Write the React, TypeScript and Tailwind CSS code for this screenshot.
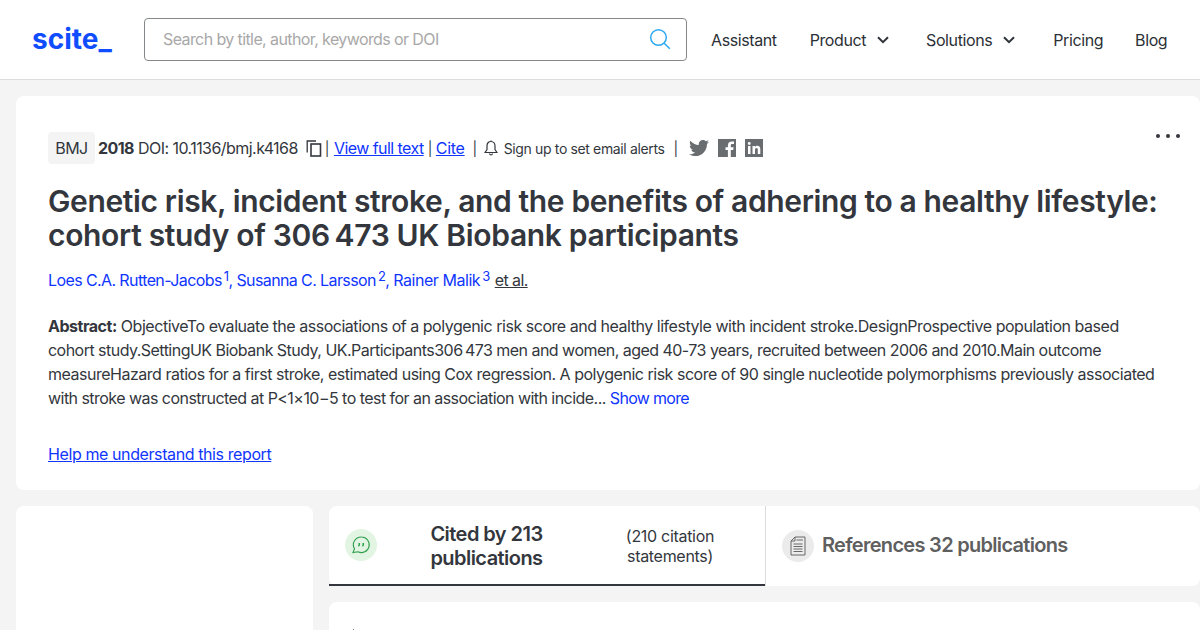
import React from 'react';
import { FaTwitter } from 'react-icons/fa';

const font = "font-['Inter','Noto_Sans',sans-serif]";

const Chevron = () => (
  <svg width="12" height="8" viewBox="0 0 12 8" fill="none" stroke="#2f343a" strokeWidth="2" className="ml-[11px]">
    <path d="M1 1.2l5 5 5-5" />
  </svg>
);

const Sep = ({ className = '' }: { className?: string }) => <span className={`text-[14px] text-[#33373d] ${className}`}>|</span>;

const Author = ({ name, n }: { name: string; n: number }) => (
  <span>
    {name}
    <sup className="text-[13px] ml-[2px] -top-[5px]">{n}</sup>
  </span>
);

const App: React.FC = () => {
  return (
    <div className={`h-[630px] w-[1200px] overflow-hidden bg-[#f4f4f4] text-[#33373d] ${font}`}>
      <header className="h-20 bg-white border-b border-[#dcdcdc] flex items-center pl-8 pr-8">
        <div className="w-[112px] text-[28px] font-bold text-[#0f4dff] leading-none -mt-[2px]">scite_</div>
        <div className="w-[543px] h-[43px] border border-[#85888a] rounded flex items-center justify-between pl-[18px] pr-[15px] -mt-[1px]">
          <span className="text-[16px] text-[#a8a8a8] tracking-[-0.6px]">Search by title, author, keywords or DOI</span>
          <svg width="22" height="22" viewBox="0 0 22 22" fill="none" stroke="#29a8f4" strokeWidth="1.5">
            <circle cx="9.5" cy="9.5" r="7.8" />
            <path d="M15.2 15.2l5.6 5.6" />
          </svg>
        </div>
        <nav className="flex items-center pl-6 text-[16px] text-[#2b3036] tracking-[-0.4px]">
          <span>Assistant</span>
          <span className="ml-[33px] flex items-center">Product<Chevron /></span>
          <span className="ml-[37px] flex items-center">Solutions<Chevron /></span>
          <span className="ml-[38px]">Pricing</span>
          <span className="ml-[32px]">Blog</span>
        </nav>
      </header>

      <section className="relative mt-4 ml-4 h-[394px] bg-white rounded-lg pl-8 pt-9">
        <div className="absolute right-[20px] top-[38px] flex gap-[6px]">
          <span className="w-1 h-1 rounded-full bg-[#33373d]" />
          <span className="w-1 h-1 rounded-full bg-[#33373d]" />
          <span className="w-1 h-1 rounded-full bg-[#33373d]" />
        </div>

        <div className="flex items-center h-8 text-[16px] tracking-[-0.55px] whitespace-nowrap">
          <span className="w-[47px] h-8 rounded bg-[#f4f4f4] flex items-center justify-center">BMJ</span>
          <b className="ml-[3px] font-bold">2018</b>
          <span className="ml-1">DOI: 10.1136/bmj.k4168</span>
          <svg width="17" height="17" viewBox="0 0 17 17" fill="none" stroke="#33373d" className="ml-2" strokeWidth="1.3">
            <path d="M10 1H1.2v11.5" />
            <rect x="5" y="4" width="9.5" height="12" strokeWidth="1.6" />
          </svg>
          <Sep className="ml-[2px]" />
          <a className="ml-[5px] text-[#0f35ff] underline">View full text</a>
          <Sep className="ml-1" />
          <a className="ml-[4px] text-[#0f35ff] underline tracking-[-0.3px]">Cite</a>
          <Sep className="ml-2" />
          <svg width="14" height="17" viewBox="0 0 14 17" fill="none" stroke="#33373d" strokeWidth="1.2" className="ml-[7px]">
            <path d="M7 1.5c-2.7 0-4 2-4 4.5v3.5L1 12.5h12l-2-3V6c0-2.500-1.300-4.500-4-4.500zM7 .5v1M5.500 13.500c.3 1.800 2.700 1.800 3 0" />
          </svg>
          <span className="ml-[6px] text-[14px] tracking-[-0.36px]">Sign up to set email alerts</span>
          <Sep className="ml-[9px]" />
          <span className="ml-[11px] flex items-center text-[#696d70]">
            <FaTwitter size={20} />
            <svg width="18" height="18" viewBox="0 0 18 18" fill="currentColor" className="ml-[9px]">
              <path d="M0 0h18v18h-5.200v-7h2.400l.4-2.800h-2.800V6.500c0-.8.2-1.400 1.400-1.400H16V2.600c-.3 0-1.200-.1-2.300-.1-2.300 0-3.800 1.400-3.800 3.900v1.800H7.500V11h2.400v7H0z" />
            </svg>
            <svg width="18" height="18" viewBox="0 0 18 18" fill="currentColor" fillRule="evenodd" className="ml-[9px]">
              <path d="M0 0h18v18H0zM3 7v8h2.500V7zM4.250 3a1.450 1.450 0 1 0 0 2.900 1.450 1.450 0 0 0 0-2.900zM7.500 7v8H10v-4.200c0-1.200.5-1.900 1.500-1.900s1.300.7 1.300 1.900V15h2.500v-4.800c0-2.300-1.200-3.400-3-3.400-1.200 0-2 .6-2.300 1.200V7z" />
            </svg>
          </span>
        </div>

        <h1 className="mt-5 text-[30px] leading-[34px] font-semibold tracking-[-0.37px] text-[#33373d] whitespace-nowrap">
          Genetic risk, incident stroke, and the benefits of adhering to a healthy lifestyle:
          <br />
          <span className="tracking-[-0.33px]">cohort study of 306{'\u2009'}473 UK Biobank participants</span>
        </h1>

        <div className="mt-[16px] h-6 flex items-center text-[16px] tracking-[-0.6px] text-[#0f35ff] whitespace-nowrap">
          <Author name="Loes C.A. Rutten-Jacobs" n={1} />
          <span>,&nbsp;</span>
          <Author name="Susanna C. Larsson" n={2} />
          <span>,&nbsp;</span>
          <span className="tracking-[-0.45px]"><Author name="Rainer Malik" n={3} /></span>
          <span className="ml-[5px] text-[#33373d] underline">et al.</span>
        </div>

        <p className="mt-[22px] text-[16px] leading-6 tracking-[-0.47px] whitespace-nowrap">
          <b className="font-bold">Abstract:</b> ObjectiveTo evaluate the associations of a polygenic risk score and healthy lifestyle with incident stroke.DesignProspective population based
          <br />
          <span className="tracking-[-0.53px]">cohort study.SettingUK Biobank Study, UK.Participants306{'\u2009'}473 men and women, aged 40-73 years, recruited between 2006 and 2010.Main outcome</span>
          <br />
          <span className="tracking-[-0.485px]">measureHazard ratios for a first stroke, estimated using Cox regression. A polygenic risk score of 90 single nucleotide polymorphisms previously associated</span>
          <br />
          <span className="tracking-[-0.54px]">with stroke was constructed at P&lt;1×10−5 to test for an association with incide...</span> <span className="text-[#0f35ff] tracking-[-0.7px]">Show more</span>
        </p>

        <a className="block mt-[32px] text-[16px] leading-6 tracking-[-0.4px] text-[#0f35ff] underline">Help me understand this report</a>
      </section>

      <div className="mt-4 ml-4 flex gap-4">
        <aside className="w-[297px] h-[200px] shrink-0 bg-white rounded-t-lg" />
        <div className="flex-1">
          <div className="flex h-20 bg-white rounded-lg">
            <div className="w-[436px] border-b-2 border-[#33373d] flex items-center pl-4 rounded-tl-lg">
              <span className="w-8 h-8 shrink-0 rounded-full bg-[#e2f4e2] flex items-center justify-center">
                <svg width="20" height="20" viewBox="0 0 20 20" fill="none" stroke="#2f9e4f" strokeWidth="1.1">
                  <path d="M10.500 2a7.800 7.800 0 1 1-3.500 14.800L2 17.500l1.500-3.700A7.800 7.800 0 0 1 10.500 2z" />
                  <path d="M8.300 8v1.500c0 .8-.4 1.300-1 1.500M12.300 8v1.500c0 .8-.4 1.300-1 1.500" strokeWidth="1.500" />
                </svg>
              </span>
              <div className="w-[219px] text-center text-[20px] leading-6 font-semibold tracking-[-0.55px] mt-[2px]">
                Cited by 213
                <br />
                publications
              </div>
              <div className="ml-[15px] w-[118px] text-center text-[16px] leading-5 tracking-[-0.3px] mt-[2px]">
                (210 citation
                <br />
                statements)
              </div>
            </div>
            <div className="flex-1 border-l border-[#dcdcdc] flex items-center pl-4">
              <span className="w-8 h-8 shrink-0 rounded-full bg-[#ebebeb] flex items-center justify-center">
                <svg width="16" height="20" viewBox="0 0 16 20" fill="none" stroke="#5a5a5a" strokeWidth="0.9">
                  <path d="M5 1h10v18H1V5z" />
                  <path d="M5 1v4H1M6.500 4H13M3.500 8h9M3.500 10.500h9M3.500 13h9M3.500 15.500h9" />
                </svg>
              </span>
              <span className="ml-2 text-[20px] font-semibold tracking-[-0.7px] text-[#5f5f5f] -mt-[3px]">References 32 publications</span>
            </div>
          </div>
          <div className="mt-4 h-[100px] bg-white rounded-lg pl-6 pt-[27px]">
            <span className="block w-px h-px bg-[#8a8a8a]" />
          </div>
        </div>
      </div>
    </div>
  );
};

export default App;
